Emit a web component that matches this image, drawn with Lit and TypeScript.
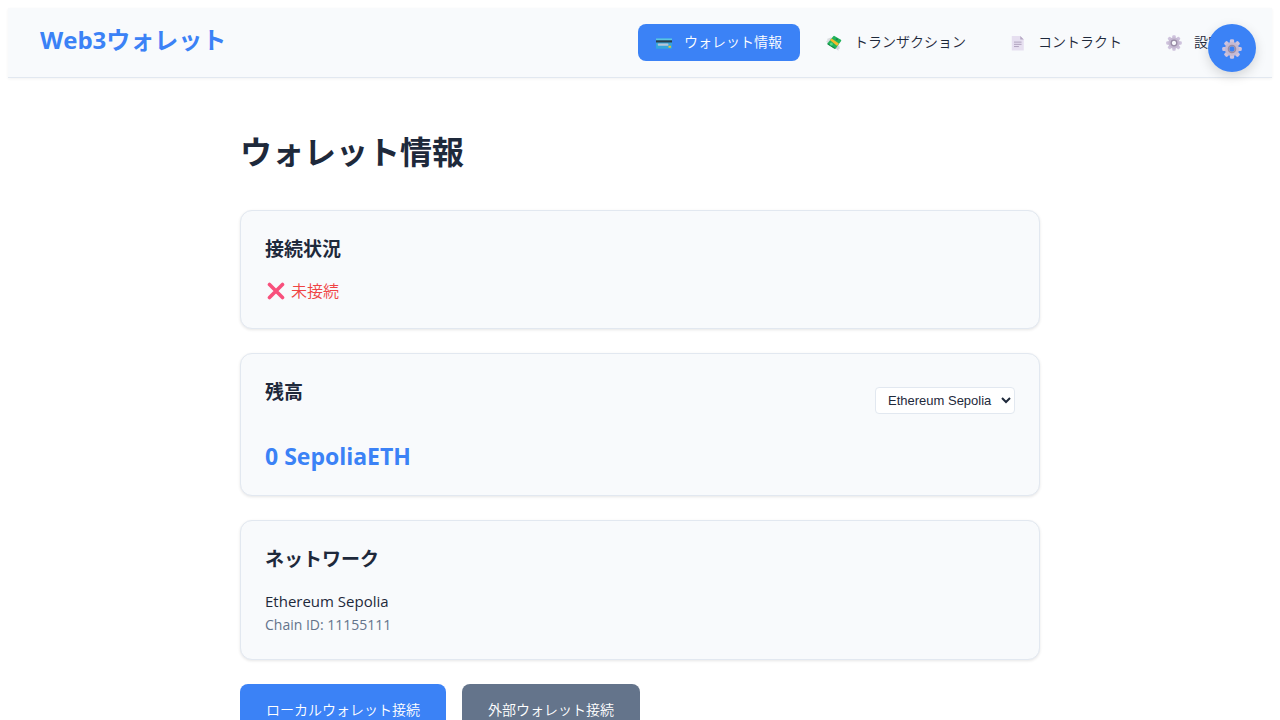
import { LitElement, html, css, svg } from "lit";
import { customElement, property, state } from "lit/decorators.js";

type IconName = "card" | "money" | "page" | "gear" | "cross";

const toothAngles = [0, 45, 90, 135, 180, 225, 270, 315];

const shapes = {
  card: svg`
    <rect x="0" y="4" width="18" height="11.500" rx="1" fill="#35a6dc"/>
    <rect x="0" y="4" width="18" height="2" fill="#5cc4e4"/>
    <rect x="0" y="6" width="18" height="2.400" fill="#2b3f4c"/>
    <rect x="2" y="9.500" width="12" height="2.600" rx="0.800" fill="#b9c6d6"/>
    <rect x="14" y="12" width="2.800" height="2.400" rx="0.500" fill="#e8c33c"/>`,
  money: svg`
    <path d="M6 2.500 1 4.500l1 1.200L0.200 7l1.800 3.500 5-4z" fill="#d9dde0"/>
    <path d="M8.500 13.500l5.500 4.300v-2.200l1.500-.2L15 12l-3-1z" fill="#d3cfdd"/>
    <path d="M9.500 1 16.800 5.300Q17.600 6 17 6.800L11 15.200Q10.400 16 9.600 15.500L2 10.800Q1.300 10.200 1.800 9.400L8.200 1.400Q8.800.600 9.500 1z" fill="#22b35b"/>
    <path d="M1.900 9.300 10 14.400 9.600 15.500 2 10.800z" fill="#148746"/>
    <path d="M6.300 3.800 14.500 9.600 12.600 12.400 4.600 6z" fill="#f5b829"/>
    <circle cx="6" cy="10" r="1.700" fill="#52dc85"/>
    <circle cx="12.200" cy="4.900" r="1.300" fill="#158a49"/>`,
  page: svg`
    <path d="M2 1h9.500L15.500 5v12.500H2z" fill="#e6dff0"/>
    <path d="M11.500 1l4 4h-4z" fill="#b6a9c4"/>
    <path d="M4.500 8h8.500M4.500 10.500h8.500M4.500 13h5.500" stroke="#a99bb8" stroke-width="1" fill="none"/>`,
  gear: svg`
    <g fill="#cfc3dd">${toothAngles.map(
      (a) => svg`<rect x="7.100" y="0.200" width="3.800" height="5" rx="1.200" transform="rotate(${a} 9 9)"/>`
    )}</g>
    <circle cx="9" cy="9" r="4.400" fill="none" stroke="#c5b9d2" stroke-width="4"/>
    <circle cx="9" cy="9" r="3.200" fill="none" stroke="#998da6" stroke-width="1.400"/>`,
  cross: svg`
    <path d="M2.500 2.500 15.500 15.500M15.500 2.500 2.500 15.500" stroke="#f8507c" stroke-width="3.600" stroke-linecap="round"/>`,
};

@customElement("wallet-icon")
class WalletIcon extends LitElement {
  @property() name: IconName = "gear";

  static styles = css`
    :host { display: inline-flex; width: 18px; height: 18px; flex: none; }
    svg { width: 100%; height: 100%; }
  `;

  render() {
    return html`<svg viewBox="0 0 18 18" aria-hidden="true">${shapes[this.name]}</svg>`;
  }
}

interface NavItem { id: string; icon: IconName; label: string; }

const navItems: NavItem[] = [
  { id: "wallet", icon: "card", label: "ウォレット情報" },
  { id: "transaction", icon: "money", label: "トランザクション" },
  { id: "contract", icon: "page", label: "コントラクト" },
  { id: "settings", icon: "gear", label: "設定" },
];

@customElement("app-root")
class AppRoot extends LitElement {
  @state() private active = "wallet";

  static styles = css`
    :host {
      display: block;
      padding: 8px;
      color: #1e293b;
      background: #fff;
      font-family: "Open Sans", "Noto Sans CJK JP", sans-serif;
      font-size: 16px;
    }
    * { box-sizing: border-box; }
    h1, h2, p { margin: 0; }
    button { font: inherit; border: 0; cursor: pointer; }
    .header {
      display: flex;
      align-items: flex-start;
      justify-content: space-between;
      padding: 16px 32px;
      background: #f8fafc;
      border-bottom: 1px solid #e2e8f0;
      box-shadow: 0 1px 3px rgba(0, 0, 0, 0.05);
    }
    .brand { font-size: 24px; line-height: 32px; font-weight: 700; color: #3b82f6; }
    .nav { display: flex; gap: 8px; }
    .tab {
      display: flex;
      align-items: center;
      gap: 12px;
      padding: 7px 18px 9px;
      border-radius: 8px;
      background: transparent;
      color: #1e293b;
      font-size: 14px;
      font-weight: 350;
      line-height: 21px;
      white-space: nowrap;
    }
    .tab wallet-icon { width: 16px; height: 16px; margin-top: 3px; }
    .tab.active { background: #3b82f6; color: #fff; }
    .floating {
      position: fixed;
      top: 24px;
      right: 24px;
      display: flex;
      align-items: center;
      justify-content: center;
      width: 48px;
      height: 48px;
      padding: 2px 0 0;
      border-radius: 50%;
      background: #3b82f6;
      box-shadow: 0 4px 12px rgba(0, 0, 0, 0.15);
    }
    .floating wallet-icon { width: 20px; height: 20px; }
    .main {
      display: flex;
      flex-direction: column;
      gap: 24px;
      max-width: 800px;
      margin: 0 auto;
      padding: 50px 0 32px;
    }
    .title { font-size: 32px; line-height: 48px; font-weight: 700; padding-bottom: 10px; }
    .card {
      padding: 24px;
      border: 1px solid #e2e8f0;
      border-radius: 12px;
      background: #f8fafc;
      box-shadow: 0 1px 3px rgba(0, 0, 0, 0.1);
    }
    .heading { font-size: 19px; line-height: 28px; font-weight: 700; padding-bottom: 15px; }
    .status {
      display: flex;
      align-items: center;
      gap: 6px;
      padding-left: 2px;
      font-weight: 350;
      line-height: 26px;
      color: #ef4444;
    }
    .balance-head { display: flex; justify-content: space-between; align-items: center; margin-bottom: 20px; }
    .balance-head .heading { padding-bottom: 16px; }
    .network {
      width: 140px;
      height: 27px;
      padding: 4px 4px 4px 8px;
      border: 1px solid #e2e8f0;
      border-radius: 4px;
      background: #fff;
      color: #1e293b;
      font-family: "Liberation Sans", Arial, sans-serif;
      font-size: 13px;
    }
    .balance { font-size: 23px; line-height: 29px; font-weight: 700; color: #3b82f6; }
    .name { font-size: 15px; line-height: 26px; }
    .chain { font-size: 14px; line-height: 21px; color: #64748b; }
    .actions { display: flex; gap: 16px; }
    .action {
      padding: 15px 26px;
      border-radius: 8px;
      background: #3b82f6;
      color: #fff;
      font-size: 14px;
      font-weight: 350;
      line-height: 22px;
    }
    .action.secondary { background: #64748b; }
  `;

  render() {
    return html`
      <header class="header">
        <div class="brand">Web3ウォレット</div>
        <nav class="nav">
          ${navItems.map(
            (item) => html`<button
              class="tab ${this.active === item.id ? "active" : ""}"
              @click=${() => (this.active = item.id)}
            ><wallet-icon .name=${item.icon}></wallet-icon><span>${item.label}</span></button>`
          )}
        </nav>
      </header>
      <main class="main">
        <h1 class="title">ウォレット情報</h1>
        <section class="card">
          <h2 class="heading">接続状況</h2>
          <p class="status"><wallet-icon .name=${"cross"}></wallet-icon><span>未接続</span></p>
        </section>
        <section class="card">
          <div class="balance-head">
            <h2 class="heading">残高</h2>
            <select class="network" aria-label="ネットワーク">
              <option>Ethereum Sepolia</option>
            </select>
          </div>
          <p class="balance">0 SepoliaETH</p>
        </section>
        <section class="card">
          <h2 class="heading">ネットワーク</h2>
          <p class="name">Ethereum Sepolia</p>
          <p class="chain">Chain ID: 11155111</p>
        </section>
        <div class="actions">
          <button class="action">ローカルウォレット接続</button>
          <button class="action secondary">外部ウォレット接続</button>
        </div>
      </main>
      <button class="floating" aria-label="設定"><wallet-icon .name=${"gear"}></wallet-icon></button>
    `;
  }
}
